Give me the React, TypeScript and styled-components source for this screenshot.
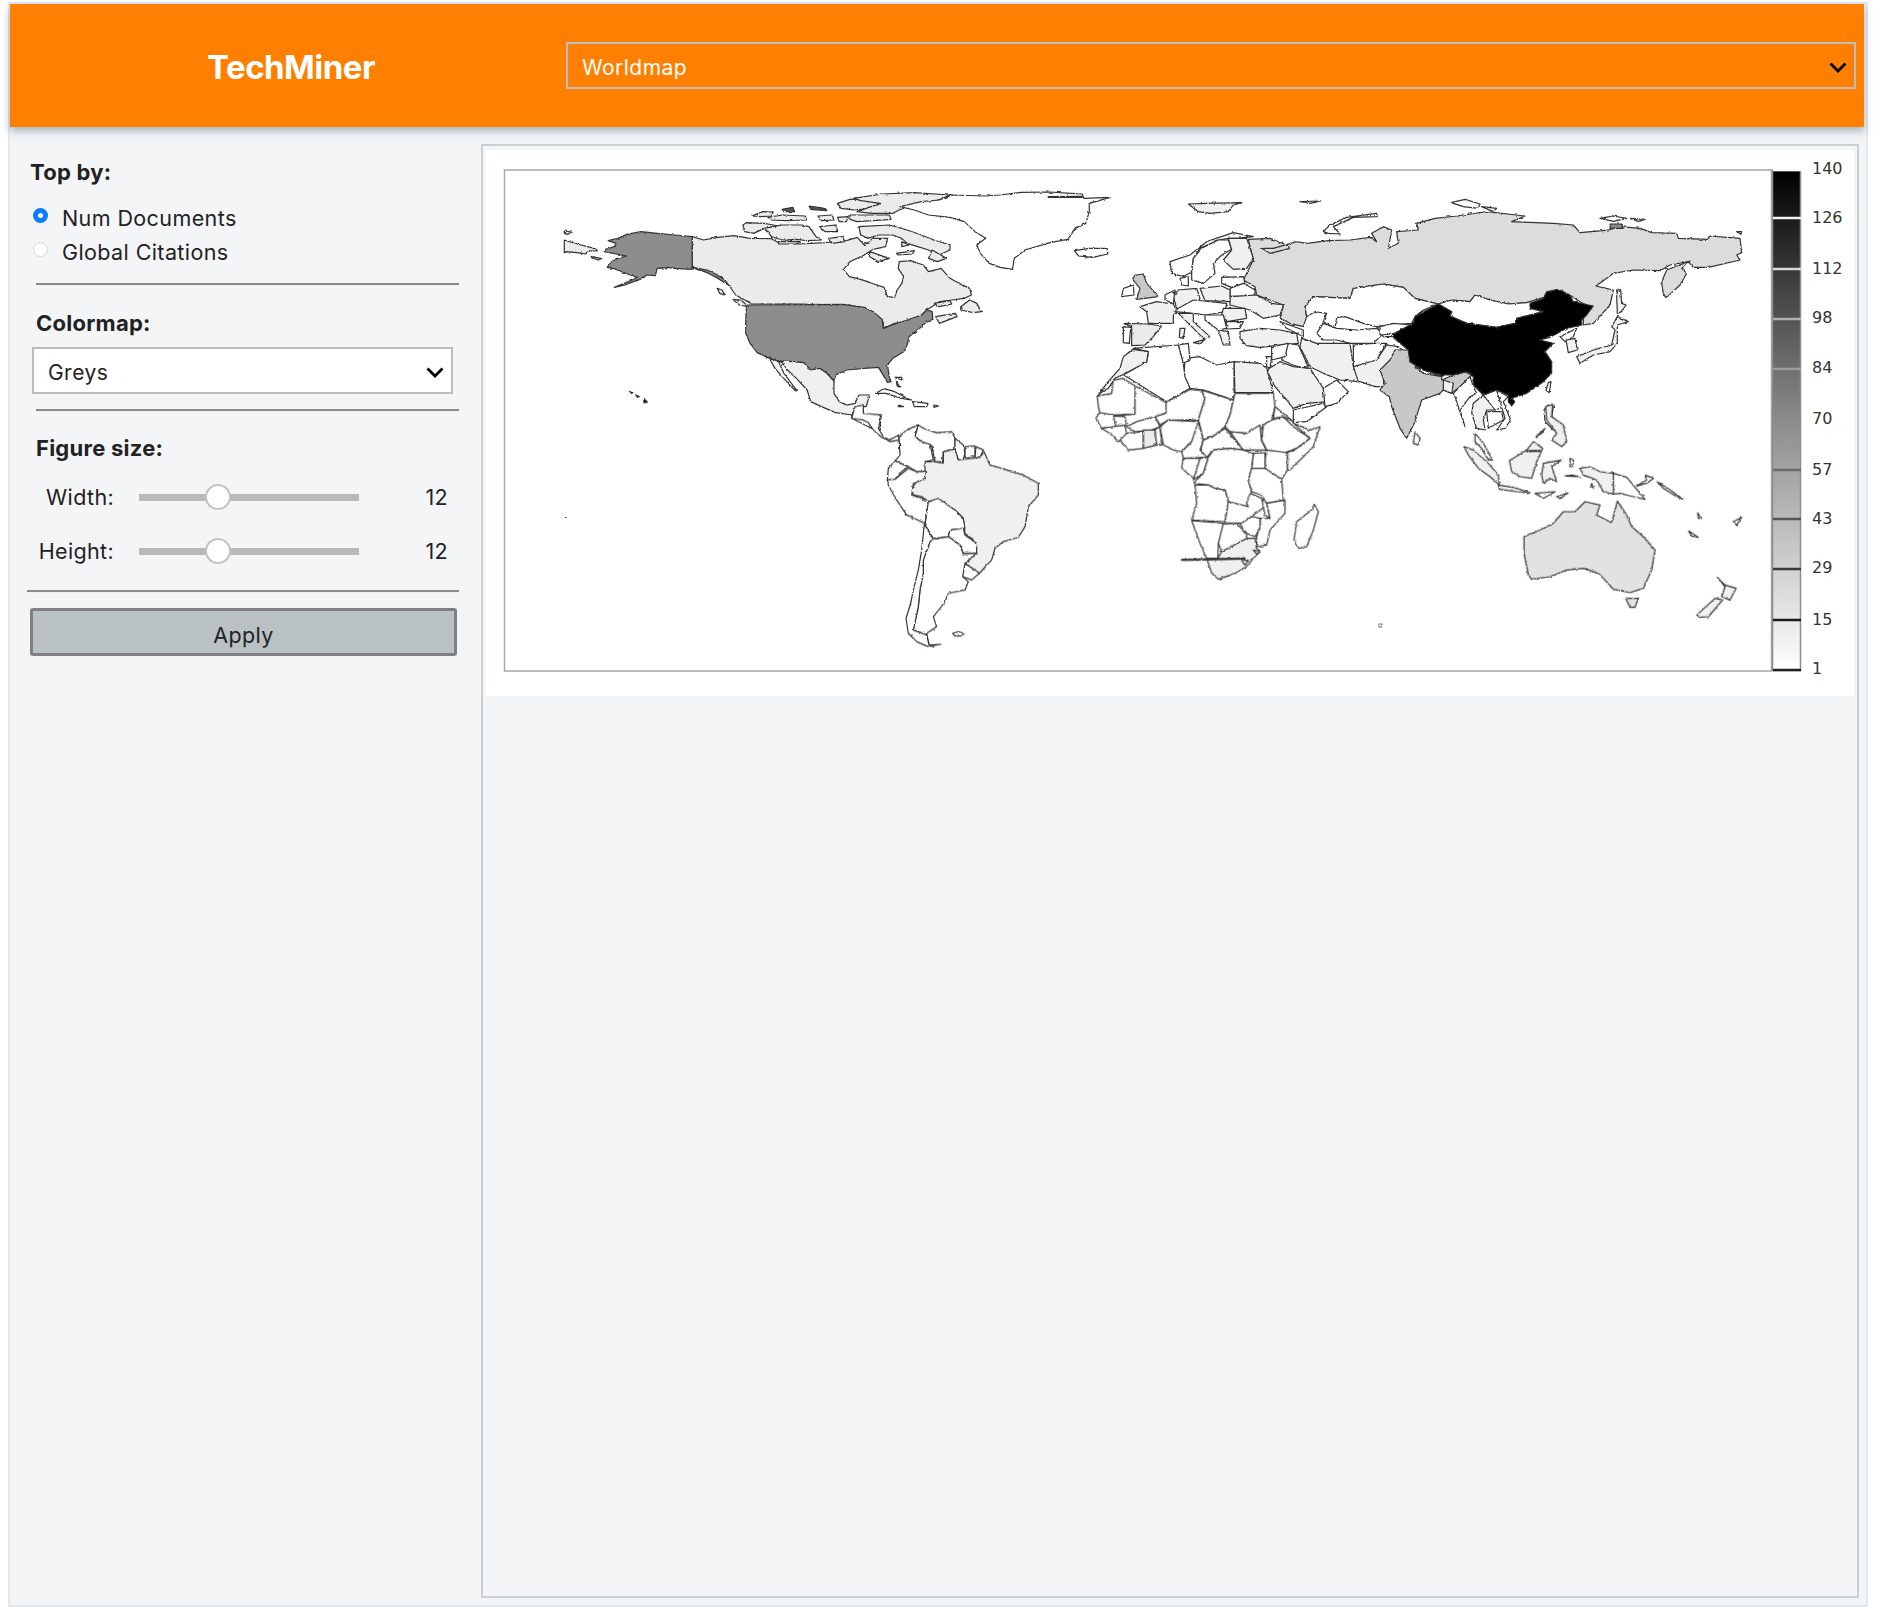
import styled, { createGlobalStyle } from "styled-components"

const FONT = `Inter, "Noto Sans", "Liberation Sans", sans-serif`

const WHITE = "#ffffff"
const PALE = "#f0f0f0"
const CANADA = "#ebebeb"
const AUS = "#e2e2e2"
const RUSSIA = "#dcdcdc"
const MID = "#c8c8c8"
const USA = "#8d8d8d"
const BLACK = "#000000"

type Shape = [string, string]

interface Region {
	x: number
	y: number
	sx: number
	sy: number
	shapes: Shape[]
}

// outlines are traced per crop, so each region has its own origin and scale
const northAmerica: Shape[] = [
	[CANADA, "M398 170L430 180L470 172L515 167L560 175L620 176L640 188L700 192L770 188L830 182L860 172L880 195L905 175L945 175L940 200L905 208L880 225L840 245L822 268L838 290L870 298L915 315L935 322L945 350L965 352L972 330L985 310L990 290L975 265L978 245L1010 242L1045 255L1060 275L1095 265L1120 295L1145 310L1175 325L1180 345L1160 355L1125 360L1090 365L1055 390L1040 410L1000 425L965 430L935 445L930 420L905 400L880 385L820 375L700 372L565 372L545 360L520 345L500 315L470 295L440 275L398 262Z"],
	[USA, "M398 170L350 165L300 160L255 155L215 163L190 175L163 182L185 190L180 200L155 208L152 215L185 222L215 228L190 235L172 245L160 262L180 266L200 275L225 285L245 292L220 305L180 322L210 315L250 298L272 285L295 287L300 265L330 262L350 265L398 268Z"],
	[USA, "M398 262L440 270L465 283L490 300L500 315L470 295L440 278Z"],
	[USA, "M550 375L820 373L880 382L905 395L930 418L933 445L965 432L1000 420L1040 405L1055 390L1070 395L1072 418L1050 430L1030 450L1005 470L1000 495L990 515L960 535L945 555L950 590L955 605L945 607L930 580L920 562L880 565L830 570L800 585L795 603L775 580L755 565L730 570L710 548L680 545L640 543L615 535L580 518L560 490L548 460L548 430Z"],
	[PALE, "M615 537L640 543L680 545L710 548L730 570L755 565L775 580L795 603L795 640L810 665L830 675L855 670L865 645L895 645L885 680L870 680L850 700L845 705L800 698L760 680L730 665L720 630L690 595L665 570L655 555L650 547L640 545L655 580L690 630L680 625L650 590L630 565Z"],
	[CANADA, "M40 180L75 192L105 200L130 207L132 213L105 212L100 222L75 218L45 215L40 218Z"],
	[CANADA, "M40 153L60 156L50 163L40 160Z"],
	[CANADA, "M115 230L145 236L135 240L118 234Z"],
	[CANADA, "M540 135L550 128L600 130L625 135L650 140L630 150L600 145L570 160L545 155Z"],
	[CANADA, "M565 108L595 95L625 96L620 108L590 110Z"],
	[CANADA, "M610 112L650 105L715 108L718 120L660 122L620 120Z"],
	[CANADA, "M600 145L650 135L705 135L725 140L745 170L760 180L720 182L690 178L650 180L620 170L610 155Z"],
	[CANADA, "M640 185L700 185L690 192L640 192Z"],
	["#555555", "M725 78L770 85L775 92L730 88Z"],
	["#555555", "M650 88L680 82L685 95L655 95Z"],
	[CANADA, "M750 108L790 105L795 120L760 122Z"],
	[CANADA, "M755 140L800 135L805 155L770 155Z"],
	[CANADA, "M780 175L820 170L825 185L790 190Z"],
	[CANADA, "M805 70L840 58L900 55L940 65L905 85L850 90L815 85Z"],
	[CANADA, "M805 112L835 110L830 125L810 125Z"],
	[CANADA, "M840 105L950 105L955 118L860 125L840 118Z"],
	[CANADA, "M850 55L930 42L1020 38L1120 45L1100 55L1060 70L1000 78L960 100L900 100L860 95L925 70L870 62Z"],
	[CANADA, "M865 140L950 135L1000 150L1040 165L1075 180L1120 195L1120 210L1090 225L1060 210L1030 200L1000 190L985 175L960 165L920 165L890 175L870 165Z"],
	[CANADA, "M1070 210L1110 235L1085 245L1060 235Z"],
	[CANADA, "M970 220L1020 212L1015 222L975 225Z"],
	[CANADA, "M985 185L1005 195L985 200Z"],
	[CANADA, "M895 215L950 235L920 245L895 230Z"],
	[CANADA, "M1150 380L1175 360L1195 370L1208 395L1185 398L1150 390Z"],
	[CANADA, "M1075 370L1120 362L1125 372L1090 380Z"],
	[CANADA, "M1080 410L1135 400L1140 410L1090 430Z"],
	[CANADA, "M512 358L535 360L555 380L530 375Z"],
	[CANADA, "M468 325L482 330L488 345L475 340Z"],
	[WHITE, "M1125 45L1220 48L1260 45L1320 37L1400 36L1490 42L1495 55L1568 52L1510 70L1510 95L1500 130L1470 145L1450 178L1400 188L1330 210L1300 235L1295 268L1260 262L1230 250L1205 220L1195 195L1220 175L1190 155L1160 125L1120 112L1060 105L1020 90L980 80L1040 65L1090 60Z"],
	["#555555", "M1395 50L1490 49L1490 52L1395 52Z"],
	[WHITE, "M1468 212L1510 205L1560 205L1562 222L1520 232L1480 228Z"],
	[BLACK, "M225 636L232 638L228 640Z"],
	[BLACK, "M240 645L250 650L244 651Z"],
	[BLACK, "M262 655L272 665L264 670Z"],
	[WHITE, "M912 640L935 626L965 635L1010 660L985 655L940 640Z"],
	[WHITE, "M1015 665L1058 670L1055 680L1020 680Z"],
	[WHITE, "M975 675L990 680L975 680Z"],
	[WHITE, "M1075 675L1088 678L1075 682Z"],
	[WHITE, "M965 592L985 592L985 600Z"],
	[WHITE, "M970 605L980 622L972 618Z"],
	[WHITE, "M845 705L875 680L880 715L925 705L925 750L900 745L845 715Z"],
]

const southAmerica: Shape[] = [
	[WHITE, "M250 40L305 45L295 85L310 110L330 120L355 105L358 120L330 125L305 112L280 90L265 68L250 60L215 55L225 20L250 15Z"],
	[WHITE, "M357 110L380 90L415 75L405 110L425 125L450 130L460 180L435 185L440 215L410 215L385 200L345 183L360 165Z"],
	[WHITE, "M415 75L430 85L470 98L515 95L525 115L525 145L490 155L488 185L465 185L455 135L425 125L405 110Z"],
	[WHITE, "M525 115L550 135L555 160L550 178L535 180L525 150Z"],
	[WHITE, "M555 140L585 138L585 170L555 175Z"],
	[WHITE, "M588 140L610 150L600 172L585 170Z"],
	[PALE, "M435 185L465 185L490 190L490 155L525 148L535 180L555 178L600 172L612 155L630 195L680 210L730 225L775 250L775 285L745 320L735 380L715 412L670 425L645 445L635 480L598 520L555 490L590 460L580 420L555 400L550 355L525 330L475 300L445 305L425 290L400 285L395 265L410 245L435 235Z"],
	[WHITE, "M345 183L385 200L365 215L345 238L322 240L325 205Z"],
	[WHITE, "M322 240L345 238L385 205L410 215L440 215L435 235L400 250L395 285L425 295L445 305L435 370L380 345L350 300L325 255Z"],
	[WHITE, "M445 305L475 295L525 330L550 355L555 385L510 390L505 410L460 415L435 375Z"],
	[WHITE, "M510 390L550 385L555 405L590 430L590 460L550 460L540 435L505 410Z"],
	[WHITE, "M555 490L598 520L575 540L548 530L548 510Z"],
	[WHITE, "M460 418L505 410L540 435L550 462L590 460L555 490L548 530L565 545L555 570L505 580L495 605L480 625L460 650L470 680L440 700L447 735L440 705L400 690L415 620L420 570L430 520L430 480L450 425Z"],
	[WHITE, "M433 372L460 418L450 425L430 480L430 520L420 570L415 620L400 690L440 705L447 735L480 733L445 740L410 725L385 700L378 655L392 610L400 570L415 510L425 450Z"],
	[WHITE, "M518 700L535 695L553 700L545 708L525 708Z"],
]

const asiaRussia: Shape[] = [
	[RUSSIA, "M-395 178L-330 175L-280 195L-270 205L-330 220L-355 205L-320 205L-250 185L-220 190L-155 182L-90 180L-30 172L-10 185L-25 160L10 140L35 150L25 205L55 190L50 155L115 150L110 130L165 115L230 108L320 95L435 108L395 125L520 130L580 135L600 158L685 150L720 140L780 145L815 158L890 160L895 175L985 178L990 168L1080 175L1085 218L1070 225L1080 240L985 262L940 262L925 245L870 255L840 272L760 270L700 280L648 318L700 330L690 375L640 430L610 435L610 405L635 385L600 365L570 345L530 330L490 352L470 365L440 368L385 372L330 360L285 345L270 365L215 360L175 372L105 355L70 322L10 312L-80 325L-90 355L-200 350L-225 380L-220 410L-230 440L-270 430L-300 415L-290 375L-370 345L-375 320L-410 300L-400 280L-380 240Z"],
	[RUSSIA, "M930 243L905 265L920 280L900 315L860 352L850 345L845 305L860 270Z"],
	[PALE, "M715 325L722 330L725 370L738 375L725 395L712 400L710 345Z"],
	[WHITE, "M213 68L255 58L300 72L295 85L250 80Z"],
	[WHITE, "M305 80L350 85L340 95Z"],
	[WHITE, "M660 115L700 108L740 115L700 124Z"],
	[WHITE, "M750 115L795 118L775 124Z"],
	["#888888", "M690 132L725 132L728 145L690 145Z"],
	[WHITE, "M1070 155L1085 155L1083 163Z"],
	[WHITE, "M175 372L215 360L270 365L285 345L330 360L385 372L440 368L490 352L490 395L450 405L410 415L405 430L350 442L300 435L260 430L210 408L215 395Z"],
	[WHITE, "M0 440L40 430L95 435L100 430L40 462L0 465Z"],
	[MID, "M45 510L85 510L90 545L130 570L185 585L185 600L220 585L255 575L275 585L240 620L215 640L190 630L180 640L125 660L105 725L80 775L60 745L35 680L28 650L0 630L15 610L0 570L30 540Z"],
	[PALE, "M190 600L220 610L215 640L190 630Z"],
	[WHITE, "M105 560L185 590L130 580Z"],
	[WHITE, "M220 640L270 590L280 620L290 640L270 650L240 690L255 740L225 650Z"],
	[PALE, "M280 670L310 645L335 665L345 690L320 690L310 720L315 750L290 745L275 700Z"],
	[WHITE, "M310 645L350 630L375 680L345 690Z"],
	[WHITE, "M350 630L385 650L370 665L392 720L375 745L350 750L375 715Z"],
	[WHITE, "M320 695L365 695L370 720L325 745Z"],
	[BLACK, "M175 372L215 395L210 408L260 430L300 435L350 442L405 430L410 415L450 405L490 395L450 385L450 370L490 355L500 335L535 328L570 345L580 365L640 378L620 405L605 420L605 435L560 445L510 472L480 480L520 490L495 515L515 545L515 580L490 605L440 640L410 650L395 655L405 665L395 678L385 665L385 645L350 630L310 645L280 615L280 590L260 575L220 585L185 585L130 570L90 545L85 510L42 475L40 462L100 430L105 410L130 395Z"],
	[WHITE, "M540 470L590 445L580 470L555 485Z"],
	[PALE, "M558 480L585 475L592 510L565 518Z"],
	[PALE, "M590 530L640 510L695 495L705 450L695 440L712 410L745 425L712 435L712 490L690 515L640 525L600 550Z"],
	[WHITE, "M505 608L513 605L508 638L498 630Z"],
	[WHITE, "M492 690L505 675L520 680L515 710L550 745L520 750L495 725Z"],
]

const europe: Shape[] = [
	[WHITE, "M240 245L300 225L350 185L430 158L490 170L440 175L415 175L385 180L330 205L310 235L305 275L280 290L245 280Z"],
	[WHITE, "M310 235L335 205L385 180L415 180L425 208L395 225L370 250L375 280L340 310L305 300L305 275Z"],
	[PALE, "M415 175L470 175L490 235L470 265L430 268L400 240L425 210Z"],
	[WHITE, "M395 292L460 290L465 310L425 322L395 310Z"],
	[WHITE, "M420 325L460 310L495 330L495 350L420 348Z"],
	[PALE, "M420 350L500 345L545 370L580 375L570 405L520 415L480 390L420 375Z"],
	[PALE, "M330 325L395 318L420 330L420 365L345 362Z"],
	[PALE, "M265 330L320 325L330 355L315 378L310 385L260 385L250 350Z"],
	[WHITE, "M270 295L295 290L295 318L275 315Z"],
	[WHITE, "M225 345L255 330L250 370L225 360Z"],
	[MID, "M135 285L160 282L170 310L205 350L140 358L150 325L128 298Z"],
	[WHITE, "M100 325L130 315L132 345L95 350Z"],
	[PALE, "M150 380L200 365L250 372L262 395L250 405L250 430L215 430L175 430L170 395Z"],
	[CANADA, "M100 430L175 432L215 438L190 470L165 495L125 497L125 440Z"],
	[WHITE, "M100 440L122 442L118 490L100 488Z"],
	[PALE, "M265 400L310 400L310 425L360 470L340 475L305 440L275 410Z"],
	[PALE, "M310 488L345 478L330 492Z"],
	[PALE, "M270 445L285 445L280 475L268 472Z"],
	[WHITE, "M310 360L410 370L405 395L350 405L310 400L255 395L265 385Z"],
	[PALE, "M400 385L465 385L470 415L410 425L395 405Z"],
	[WHITE, "M410 425L460 425L450 445L410 447Z"],
	[PALE, "M385 450L415 455L420 495L400 495Z"],
	[WHITE, "M345 405L400 405L410 445L385 450L345 420Z"],
	[PALE, "M450 455L510 445L570 450L620 460L625 490L560 497L510 502L470 497L450 475Z"],
	[WHITE, "M570 425L640 450L640 470L620 460L590 445Z"],
	[WHITE, "M1045 372L975 355L940 322L880 312L790 325L780 355L670 350L645 380L650 410L675 395L710 400L700 425L735 445L740 412L765 410L820 430L860 440L900 435L965 430L975 410L1000 390Z"],
	[WHITE, "M700 430L740 445L800 450L860 445L880 460L850 490L780 490L740 480L700 480L680 460Z"],
	[WHITE, "M860 440L920 445L910 470L880 470Z"],
	[WHITE, "M790 495L850 490L890 490L860 540L820 565L790 560Z"],
	[PALE, "M860 540L890 495L925 500L945 515L920 560L880 600L890 620L855 620L810 605L800 605L790 560Z"],
	[PALE, "M635 475L680 490L780 490L790 560L805 605L750 600L700 580L660 560L630 500Z"],
	[WHITE, "M575 540L590 490L625 495L655 560L640 565L610 555Z"],
	[WHITE, "M545 500L595 490L585 530L545 540Z"],
	[WHITE, "M530 530L545 530L540 565L530 560Z"],
	[PALE, "M530 570L570 545L610 560L660 565L700 625L730 655L715 665L650 670L610 685L590 660L555 620Z"],
	[WHITE, "M610 690L700 670L710 680L650 725L610 728Z"],
	[WHITE, "M700 625L740 600L775 635L740 670L705 680Z"],
	[PALE, "M432 545L510 550L530 565L550 638L435 638Z"],
	[WHITE, "M285 535L330 530L380 555L432 545L432 660L340 630L300 625L282 590Z"],
	[WHITE, "M265 495L295 490L300 540L280 550L270 515Z"],
	[WHITE, "M130 505L265 495L270 515L280 550L285 590L300 625L230 665L110 590L100 585L170 545L175 515Z"],
	[PALE, "M128 508L175 515L170 545L110 578L75 595L55 625L30 640L22 650L50 610L90 565L100 530Z"],
	[PALE, "M295 72L350 70L455 68L430 75L415 95L360 100L325 95Z"],
	[WHITE, "M700 155L720 135L770 112L860 100L862 110L790 112L730 140L750 162L715 160Z"],
	[WHITE, "M630 65L692 63L660 70Z"],
]

const africa: Shape[] = [
	[WHITE, "M52 78L95 70L100 30L130 25L165 48L165 132L100 135L60 130L55 110Z"],
	[WHITE, "M165 48L258 97L258 130L225 140L170 155L140 170L135 140L100 138L165 132Z"],
	[WHITE, "M258 97L330 58L365 62L375 85L355 150L265 150L240 165L225 140L258 130Z"],
	[WHITE, "M365 60L460 90L450 135L435 170L405 195L370 210L358 160L355 150L375 85Z"],
	[WHITE, "M460 90L465 70L580 70L585 110L575 150L550 165L540 185L500 190L450 185L435 170L450 135Z"],
	[WHITE, "M585 110L640 155L610 140L580 145Z"],
	[WHITE, "M48 140L60 128L100 135L108 170L65 175L50 150Z"],
	[WHITE, "M65 175L135 165L140 195L115 215L90 190Z"],
	[WHITE, "M140 190L190 185L190 235L145 240L120 210Z"],
	[WHITE, "M140 170L170 155L225 140L240 170L215 180L165 185Z"],
	[CANADA, "M190 180L225 180L230 225L190 235Z"],
	[WHITE, "M225 180L240 170L245 225L230 225Z"],
	[WHITE, "M240 170L265 150L355 155L365 190L335 215L305 245L280 240L250 225Z"],
	[WHITE, "M355 155L370 210L360 240L380 262L310 265L305 245L335 215Z"],
	[WHITE, "M370 210L405 195L435 175L490 240L450 235L400 240L380 262L362 240Z"],
	[WHITE, "M450 185L500 190L540 165L545 215L560 240L490 240Z"],
	[WHITE, "M575 150L610 140L640 170L690 205L650 235L610 250L560 240L545 210L550 165Z"],
	[WHITE, "M640 160L690 180L720 170L700 230L630 300L622 300L622 248L650 235L690 205Z"],
	[WHITE, "M560 240L622 248L622 300L605 328L555 295L555 265Z"],
	[WHITE, "M520 250L555 248L555 295L515 295Z"],
	[WHITE, "M310 265L360 265L355 300L340 325L305 295Z"],
	[WHITE, "M360 265L385 262L370 310L340 330Z"],
	[WHITE, "M400 240L450 235L490 240L520 250L515 295L505 330L515 365L500 400L505 410L445 395L435 360L405 355L385 345L340 340L370 310L385 262Z"],
	[WHITE, "M515 295L555 295L605 328L610 390L560 400L545 375L515 365L505 330Z"],
	[WHITE, "M345 345L385 345L405 355L435 360L445 395L435 455L335 450L350 400Z"],
	[WHITE, "M445 395L505 410L500 400L510 370L545 385L555 410L520 435L490 460L435 458Z"],
	[WHITE, "M545 385L560 400L570 445L555 435Z"],
	[WHITE, "M560 400L615 390L615 430L570 480L560 525L530 530L530 500L540 470L540 445L570 445Z"],
	[WHITE, "M480 462L515 440L540 445L540 475L525 500L500 490Z"],
	[WHITE, "M425 462L470 460L500 495L500 505L425 545L415 520Z"],
	[WHITE, "M335 452L430 460L415 520L413 565L380 565L360 520Z"],
	[PALE, "M380 565L413 565L425 545L500 505L525 505L530 535L540 545L520 565L500 590L465 610L415 628L395 610Z"],
	[WHITE, "M485 572L505 570L495 585Z"],
	[WHITE, "M520 540L540 545L530 552Z"],
	[MID, "M305 568L495 564L495 567L305 572Z"],
	[WHITE, "M703 403L715 425L700 480L680 530L655 535L642 510L650 455L695 420Z"],
]

const oceania: Shape[] = [
	[WHITE, "M45 95L60 115L55 135L40 130Z"],
	[WHITE, "M225 100L250 130L278 180L265 180L245 145L225 125Z"],
	[PALE, "M192 140L220 150L265 190L295 225L298 255L270 230L235 205L205 165Z"],
	[PALE, "M295 255L340 262L390 278L350 275L298 268Z"],
	[PALE, "M328 182L380 150L400 125L428 145L410 185L395 235L360 230L335 215Z"],
	[PALE, "M380 152L420 151L420 154L380 155Z"],
	[PALE, "M430 190L485 180L455 200L470 245L450 235L430 250L425 225Z"],
	[PALE, "M437 20L458 13L455 50L490 75L500 125L485 140L455 120L470 100L440 60Z"],
	[WHITE, "M408 110L435 85L425 100Z"],
	[PALE, "M540 205L570 200L600 215L640 220L640 282L610 275L590 240L550 225Z"],
	[WHITE, "M640 220L680 232L705 262L735 298L700 290L660 280L640 282Z"],
	[WHITE, "M735 225L760 235L740 250L710 258L740 240Z"],
	[WHITE, "M772 245L810 270L850 298L830 290L790 265Z"],
	[WHITE, "M405 280L465 275L430 295Z"],
	[WHITE, "M470 290L505 278L480 296Z"],
	[WHITE, "M510 175L520 180L518 200L510 200Z"],
	[WHITE, "M495 228L540 230L515 225Z"],
	[WHITE, "M575 250L580 262L572 262Z"],
	[WHITE, "M893 338L903 355L895 355Z"],
	[WHITE, "M866 393L895 412L875 408Z"],
	[WHITE, "M1000 365L1025 352L1010 375Z"],
	[AUS, "M372 410L420 390L460 370L490 335L525 335L555 305L600 315L590 345L635 368L652 303L680 345L695 380L730 410L765 450L755 510L730 565L690 578L640 568L610 535L595 520L550 505L500 510L450 530L395 538L385 525L372 460Z"],
	[AUS, "M677 595L715 595L705 622L690 622Z"],
	[PALE, "M952 532L975 555L1008 565L990 600L965 590L975 560Z"],
	[PALE, "M890 645L945 595L968 600L925 650L900 652Z"],
]

const regions: Region[] = [
	{ x: 550, y: 180, sx: 1 / 2.8, sy: 1 / 3, shapes: northAmerica },
	{ x: 780, y: 400, sx: 1 / 3, sy: 1 / 3, shapes: southAmerica },
	{ x: 1380, y: 180, sx: 1 / 3, sy: 1 / 3, shapes: asiaRussia.slice(0, 9) },
	{ x: 1090, y: 180, sx: 1 / 3, sy: 1 / 3, shapes: europe },
	{ x: 1080, y: 370, sx: 1 / 3, sy: 1 / 3, shapes: africa },
	{ x: 1380, y: 180, sx: 1 / 3, sy: 1 / 3, shapes: asiaRussia.slice(9) },
	{ x: 1400, y: 400, sx: 1 / 3, sy: 1 / 3, shapes: oceania },
]

const ticks = [
	{ label: "140", y: 170, labelY: 168, mark: "#ffffff" },
	{ label: "126", y: 218, labelY: 217, mark: "#f4f4f4" },
	{ label: "112", y: 269, labelY: 268, mark: "#d8d8d8" },
	{ label: "98", y: 319, labelY: 317, mark: "#b0b0b0" },
	{ label: "84", y: 369, labelY: 367, mark: "#9c9c9c" },
	{ label: "70", y: 419, labelY: 418, mark: "#8a8a8a" },
	{ label: "57", y: 470, labelY: 469, mark: "#6a6a6a" },
	{ label: "43", y: 519, labelY: 518, mark: "#565656" },
	{ label: "29", y: 569, labelY: 567, mark: "#3a3a3a" },
	{ label: "15", y: 620, labelY: 619, mark: "#1a1a1a" },
	{ label: "1", y: 670, labelY: 668, mark: "#222222" },
]

const GlobalStyle = createGlobalStyle`
	html, body {
		margin: 0;
		background: #ffffff;
	}
	body {
		font-family: ${FONT};
	}
`

const Frame = styled.div`
	box-sizing: border-box;
	display: flex;
	flex-direction: column;
	width: 1860px;
	height: 1605px;
	margin: 2px 0 0 8px;
	border: 2px solid #e2e8ee;
	background: #f4f5f7;
	color: #222222;
`

const Header = styled.header`
	display: grid;
	grid-template-columns: 556px 1290px;
	align-items: center;
	width: 1854px;
	height: 123px;
	background: #ff7f00;
	box-shadow: 0 4px 8px rgba(90, 110, 125, 0.5);
`

const Title = styled.div`
	padding: 2px 0 0 6px;
	text-align: center;
	font-size: 33px;
	font-weight: 700;
	letter-spacing: -0.5px;
	color: #ffffff;
`

const Dropdown = styled.div<{ $dark?: boolean }>`
	box-sizing: border-box;
	display: flex;
	align-items: center;
	justify-content: space-between;
	height: 47px;
	padding: 3px 7px 0 14px;
	border: 2px solid #bdbdbd;
	background: ${({ $dark }) => ($dark ? "transparent" : "#ffffff")};
	color: ${({ $dark }) => ($dark ? "#ffffff" : "#222222")};
	font-size: 21px;
	letter-spacing: 0.45px;
`

const Chevron = () => (
	<svg width="18" height="11" viewBox="0 0 18 11">
		<path d="M1.5 1.5L9 9L16.5 1.5" fill="none" stroke="#000000" strokeWidth="2.8" />
	</svg>
)

const Body = styled.div`
	display: flex;
	flex: 1;
	min-height: 0;
`

const Sidebar = styled.aside`
	box-sizing: border-box;
	flex: none;
	width: 471px;
	padding: 30px 22px 0 17px;
`

const FieldLabel = styled.div<{ $inset: number }>`
	margin-left: ${({ $inset }) => $inset}px;
	font-size: 22px;
	font-weight: 700;
	line-height: 30px;
	letter-spacing: 0.25px;
`

const RadioGroup = styled.div`
	margin-top: 14px;
`

const RadioRow = styled.div`
	display: flex;
	align-items: center;
	gap: 14px;
	height: 34px;
	margin-left: 6px;
	font-size: 21.5px;
	letter-spacing: 0.4px;
`

const RadioDot = styled.span<{ $on?: boolean }>`
	box-sizing: border-box;
	flex: none;
	width: 15px;
	height: 15px;
	margin-top: -5px;
	border-radius: 50%;
	background: #ffffff;
	border: ${({ $on }) => ($on ? "5px solid #0a7bff" : "1px solid #d6d6d6")};
`

const Rule = styled.hr<{ $top: number; $bottom: number; $inset?: number }>`
	height: 0;
	margin: ${({ $top, $bottom, $inset = 9 }) => `${$top}px 0 ${$bottom}px ${$inset}px`};
	border: 0;
	border-top: 2px solid #8c8c8c;
	border-bottom: 1px solid #eceef0;
`

const ColormapSelect = styled(Dropdown)`
	width: 421px;
	margin: 9px 0 0 5px;
`

const SliderGroup = styled.div`
	margin-top: 7px;
`

const SliderRow = styled.div`
	display: grid;
	grid-template-columns: 87px 220px 64px;
	column-gap: 25px;
	align-items: center;
	height: 54px;
	font-size: 21.5px;
	letter-spacing: 0.35px;
`

const SliderName = styled.div`
	text-align: right;
`

const SliderTrack = styled.div`
	position: relative;
	height: 7px;
	background: #b9b9b9;
`

const SliderThumb = styled.span`
	position: absolute;
	top: 50%;
	box-sizing: border-box;
	width: 26px;
	height: 26px;
	border: 2px solid #c2c2c2;
	border-radius: 50%;
	background: #ffffff;
	transform: translate(-50%, -50%);
`

const SliderValue = styled.div`
	text-align: right;
`

const ApplyButton = styled.button`
	box-sizing: border-box;
	display: block;
	width: 427px;
	height: 48px;
	margin-left: 3px;
	padding: 6px 0 0;
	border: 3px solid #808080;
	border-radius: 3px;
	background: #b9c1c4;
	color: #222222;
	font-family: ${FONT};
	font-size: 21.5px;
	letter-spacing: 0.35px;
`

const Panel = styled.main`
	box-sizing: border-box;
	flex: none;
	width: 1378px;
	height: 1454px;
	margin-top: 17px;
	padding: 4px 3px 0 3px;
	border: 2px solid #c9d1d4;
`

const Figure = styled.svg`
	display: block;
	width: 1368px;
	height: 546px;
	background: #ffffff;
`

const MapLayer = styled.g`
	filter: url(#rough);
`

const TickLabel = styled.text`
	font-family: "DejaVu Sans", sans-serif;
	font-size: 16px;
	fill: #333333;
	dominant-baseline: central;
`

const Slider = ({ name, value, position }: { name: string; value: number; position: number }) => (
	<SliderRow>
		<SliderName>{name}</SliderName>
		<SliderTrack>
			<SliderThumb style={{ left: `${position}%` }} />
		</SliderTrack>
		<SliderValue>{value}</SliderValue>
	</SliderRow>
)

const WorldMap = () => (
	<Figure viewBox="486 150 1368 546">
		<defs>
			<linearGradient id="greys" x1="0" y1="0" x2="0" y2="1">
				<stop offset="0" stopColor="#000000" />
				<stop offset="0.5" stopColor="#8c8c8c" />
				<stop offset="1" stopColor="#ffffff" />
			</linearGradient>
			{/* the source figure is a scaled-up raster, so coasts are rough and soft */}
			<filter id="rough" colorInterpolationFilters="sRGB">
				<feTurbulence type="fractalNoise" baseFrequency="0.28" numOctaves="2" seed="4" result="noise" />
				<feDisplacementMap in="SourceGraphic" in2="noise" scale="2.5" xChannelSelector="R" yChannelSelector="G" />
				<feGaussianBlur stdDeviation="0.35" />
			</filter>
		</defs>
		<rect x="504.5" y="170" width="1267" height="501" fill="#ffffff" stroke="#a8a8a8" strokeWidth="1.5" />
		<MapLayer>
			{regions.map((region, i) => (
				<g key={i} transform={`translate(${region.x} ${region.y}) scale(${region.sx} ${region.sy})`}>
					{region.shapes.map(([fill, d], j) => (
						<path key={j} d={d} fill={fill} stroke="#333333" strokeWidth="1.2" strokeLinejoin="round" vectorEffect="non-scaling-stroke" />
					))}
				</g>
			))}
			<rect x="565" y="517" width="1.5" height="2" fill="#333333" />
			<rect x="1379" y="624" width="3" height="3" fill="#ffffff" stroke="#555555" strokeWidth="0.8" />
		</MapLayer>
		<rect x="1772.5" y="170.5" width="28" height="500" fill="url(#greys)" stroke="#8c8c8c" strokeWidth="1.5" />
		{ticks.map((tick) => (
			<g key={tick.label}>
				<rect x="1773" y={tick.y - 1.25} width="28" height="2.5" fill={tick.mark} />
				<TickLabel x="1812" y={tick.labelY}>
					{tick.label}
				</TickLabel>
			</g>
		))}
	</Figure>
)

const App = () => (
	<>
		<GlobalStyle />
		<Frame>
			<Header>
				<Title>TechMiner</Title>
				<Dropdown $dark>
					Worldmap
					<Chevron />
				</Dropdown>
			</Header>
			<Body>
				<Sidebar>
					<FieldLabel $inset={3}>Top by:</FieldLabel>
					<RadioGroup>
						<RadioRow>
							<RadioDot $on />
							Num Documents
						</RadioRow>
						<RadioRow>
							<RadioDot />
							Global Citations
						</RadioRow>
					</RadioGroup>
					<Rule $top={14} $bottom={22} />
					<FieldLabel $inset={9}>Colormap:</FieldLabel>
					<ColormapSelect>
						Greys
						<Chevron />
					</ColormapSelect>
					<Rule $top={15} $bottom={21} />
					<FieldLabel $inset={9}>Figure size:</FieldLabel>
					<SliderGroup>
						<Slider name="Width:" value={12} position={36} />
						<Slider name="Height:" value={12} position={36} />
					</SliderGroup>
					<Rule $top={12} $bottom={15} $inset={0} />
					<ApplyButton>Apply</ApplyButton>
				</Sidebar>
				<Panel>
					<WorldMap />
				</Panel>
			</Body>
		</Frame>
	</>
)

export default App
